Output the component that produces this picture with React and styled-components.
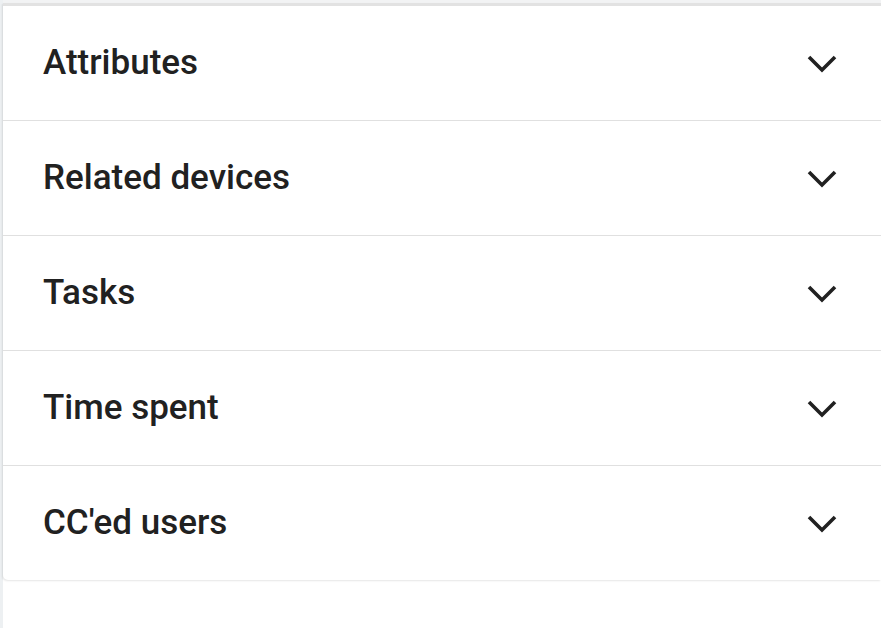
import React from 'react';
import styled, { createGlobalStyle } from 'styled-components';

const GlobalStyle = createGlobalStyle`
  html, body {
    margin: 0;
    padding: 0;
    background: #ffffff;
  }
  body {
    font-family: Roboto, "Liberation Sans", Arial, sans-serif;
  }
`;

const Page = styled.div`
  min-height: 100vh;
  border-left: 3px solid #edf0f2;
  box-sizing: border-box;
  padding-top: 3px;
  background: linear-gradient(#f2f3f4, #f2f3f4) top / 100% 3px no-repeat, #ffffff;
`;

const Card = styled.div`
  background: #ffffff;
  border-top: 3px solid #e2e2e2;
  border-bottom-left-radius: 5px;
  box-shadow: -1px 1px 2px rgba(0, 0, 0, 0.1);
  overflow: hidden;
`;

const Row = styled.div`
  display: flex;
  align-items: center;
  justify-content: space-between;
  height: 114px;
  padding: 0 44px 0 40px;
  border-top: ${(props) => (props.first ? 'none' : '1px solid #e0e0e0')};
  cursor: pointer;
`;

const Title = styled.span`
  font-size: 35px;
  font-weight: 500;
  color: #212121;
  margin-top: -1px;
`;

const Chevron = () => (
  <svg width="30" height="20" viewBox="0 0 30 20" fill="none">
    <polyline
      points="2,4 15,17 28,4"
      stroke="#212121"
      strokeWidth="3.6"
      strokeLinecap="butt"
      strokeLinejoin="miter"
    />
  </svg>
);

const sections = ['Attributes', 'Related devices', 'Tasks', 'Time spent', "CC'ed users"];

export default function App() {
  return (
    <>
      <GlobalStyle />
      <Page>
        <Card>
          {sections.map((name, i) => (
            <Row key={name} first={i === 0}>
              <Title>{name}</Title>
              <Chevron />
            </Row>
          ))}
        </Card>
      </Page>
    </>
  );
}
